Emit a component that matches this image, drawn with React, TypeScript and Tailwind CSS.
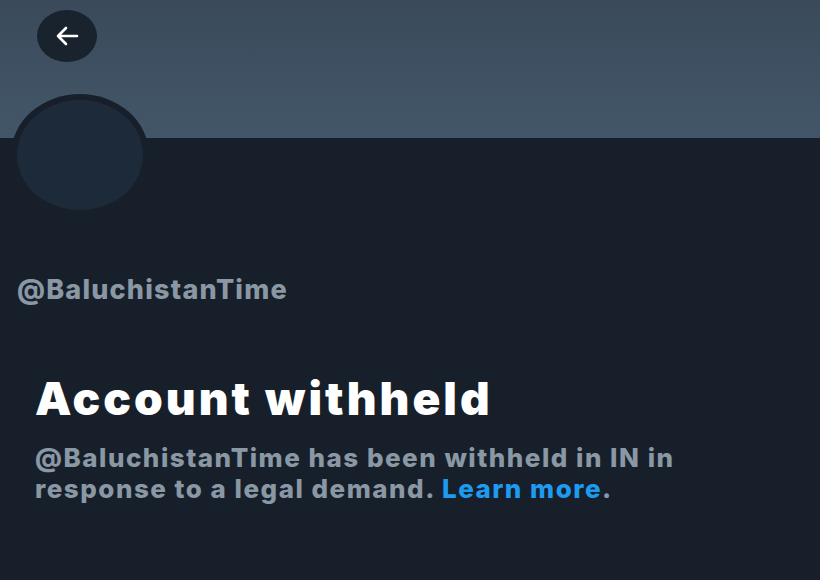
export default function App() {
  return (
    <div className="w-[820px] h-[580px] bg-[#17202a] overflow-hidden" style={{ fontFamily: "Inter, 'Noto Sans', sans-serif" }}>
      <div className="relative h-[138px] bg-gradient-to-b from-[#3a4a5b] to-[#435669]">
        <button className="absolute left-[37px] top-[10px] w-[60px] h-[52px] rounded-[50%] bg-[#19232d] flex items-center justify-center">
          <svg width="26" height="22" viewBox="0 0 26 22" fill="none" stroke="white" strokeWidth="2.6" strokeLinecap="round" strokeLinejoin="round">
            <path d="M23 11H4M12 3L4 11l8 8" />
          </svg>
        </button>
        <div className="absolute left-[11px] top-[94px] w-[138px] h-[122px] rounded-[50%] bg-[#17202a] flex items-center justify-center">
          <div className="w-[126px] h-[110px] rounded-[50%] bg-[#1d2a39]" />
        </div>
      </div>
      <div className="pt-[136px] pl-[17px] text-[27px] font-extrabold text-[#8a97a4] leading-[32px] tracking-[1.2px]">@BaluchistanTime</div>
      <div className="pl-[35px] pt-[64px]">
        <div className="text-[46px] font-black text-white leading-[56px] tracking-[3px]">Account withheld</div>
        <div className="text-[26px] font-extrabold text-[#8a97a4] leading-[31px] mt-[16px] w-[740px] tracking-[1.5px]">
          @BaluchistanTime has been withheld in IN in<br />response to a legal demand. <span className="text-[#1d9bf0]">Learn more</span>.
        </div>
      </div>
    </div>
  );
}
